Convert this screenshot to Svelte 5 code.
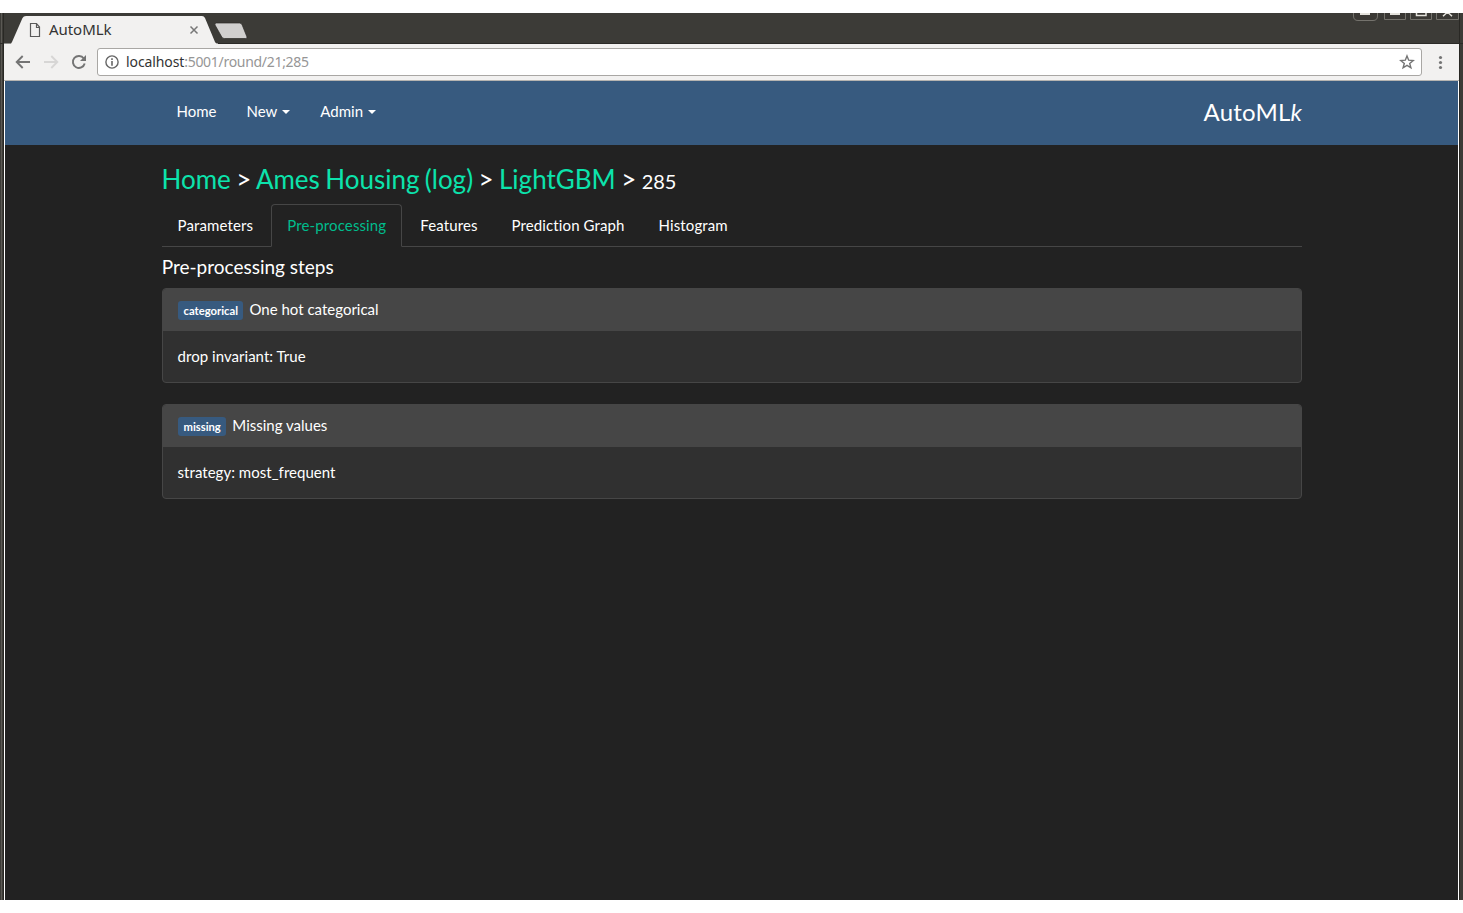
<script>
  const tabs = ['Parameters', 'Pre-processing', 'Features', 'Prediction Graph', 'Histogram'];
  const active = 'Pre-processing';
  const steps = [
    { tag: 'categorical', name: 'One hot categorical', detail: 'drop invariant: True' },
    { tag: 'missing', name: 'Missing values', detail: 'strategy: most_frequent' }
  ];
</script>

<div class="window">
  <header class="tabstrip">
    <svg class="shapes" width="260" height="31" viewBox="0 0 260 31">
      <path d="M4 31V30.500H11L12 29L22.500 5Q23.500 3 26 3H202Q204 3 205 5L215 29Q215.500 30.500 218 30.500V31Z" fill="#f2f1f0" />
      <path d="M216.500 10H239.500Q241.500 10 242.200 12L247 24Q247.500 25.500 245.500 25.500H224.500Q222.500 25.500 221.800 24L215 12Q214.300 10 216.500 10Z" fill="#d0cfce" stroke="#2b2a27" stroke-width=".7" />
      <path d="M30.500 10.500H36.500L39.500 14V23.500H30.500ZM36.500 10.500V14.500H39.500" fill="none" stroke="#5a5a5a" stroke-width="1.200" />
      <path d="M190.500 13.500L197.500 20.500M197.500 13.500L190.500 20.500" stroke="#777" stroke-width="1.500" />
    </svg>
    <span class="title">AutoMLk</span>
    <svg class="controls" width="112" height="9" viewBox="0 0 112 9">
      <g fill="#3b3935" stroke="#75736d">
        <path d="M2.500 0V3Q2.500 7.500 7 7.500H22Q26.500 7.500 26.500 3V0" />
        <path d="M33.500 0V6.500H54.500V0M59.500 0V6.500H80.500V0M85.500 0V6.500H107.500V0" />
      </g>
      <path d="M9 0H19V2H9ZM39 0H49V2H39Z" fill="#e4e2dc" />
      <path d="M65.500 0V2.500H75V0M92 3.200L96.500 -1L101 3.200" fill="none" stroke="#e4e2dc" stroke-width="1.500" />
    </svg>
  </header>

  <div class="toolbar">
    <svg class="nav-icons" width="93" height="36" viewBox="4 0 93 36">
      <g fill="none" stroke-width="1.900">
        <path d="M30 18H17M22.700 12L16.700 18L22.700 24" stroke="#747474" />
        <path d="M44 18H57M51.300 12L57.300 18L51.300 24" stroke="#d7d6d5" />
        <path d="M83.800 14.500A6 6 0 1 0 84.700 19.500" stroke="#747474" />
      </g>
      <path d="M86 11V17H80Z" fill="#747474" />
    </svg>
    <div class="address">
      <svg width="14" height="14" viewBox="0 0 14 14">
        <circle cx="7" cy="7" r="6.100" fill="none" stroke="#666" stroke-width="1.400" />
        <path d="M6.200 6H7.800V10.700H6.200ZM6.200 3.300H7.800V4.900H6.200Z" fill="#666" />
      </svg>
      <span class="url"><b>localhost</b>:5001/round/21;285</span>
      <svg class="star" width="16" height="16" viewBox="0 0 16 16">
        <path d="M8 1.900L9.700 6.200L14.200 6.500L10.700 9.400L11.900 13.800L8 11.300L4.100 13.800L5.300 9.400L1.800 6.500L6.300 6.200Z" fill="none" stroke="#747474" stroke-width="1.400" />
      </svg>
    </div>
    <svg class="more" width="6" height="18" viewBox="0 0 6 18">
      <g fill="#747474"><circle cx="3.500" cy="4.500" r="1.600" /><circle cx="3.500" cy="9.500" r="1.600" /><circle cx="3.500" cy="14.500" r="1.600" /></g>
    </svg>
  </div>

  <div class="page">
    <nav class="navbar">
      <div class="container">
        <span class="link">Home</span>
        <span class="link">New <i class="caret"></i></span>
        <span class="link">Admin <i class="caret"></i></span>
        <span class="brand">AutoML<em>k</em></span>
      </div>
    </nav>
    <main class="container">
      <h3><a href="#home">Home</a> &gt; <a href="#dataset">Ames Housing (log)</a> &gt; <a href="#model">LightGBM</a> &gt; <small>285</small></h3>
      <ul class="tabs">
        {#each tabs as tab}
          <li class:active={tab === active}>{tab}</li>
        {/each}
      </ul>
      <h4>Pre-processing steps</h4>
      {#each steps as step}
        <section class="panel">
          <div class="heading"><span class="label">{step.tag}</span><span>{step.name}</span></div>
          <div class="body">{step.detail}</div>
        </section>
      {/each}
    </main>
  </div>
</div>

<style>
  :global(body) { background: #fff; }
  * { box-sizing: border-box; }
  .window {
    width: 1463px;
    height: 887px;
    margin-top: 13px;
    padding: 0 4px;
    overflow: hidden;
    display: flex;
    flex-direction: column;
    background: linear-gradient(90deg, #3c3b37 0 1px, #5b5954 1px 2px, #3c3b37 2px 3px, #292824 3px 4px, #3c3b37 4px 1459px, #292824 1459px 1460px, #3c3b37 1460px);
    font-family: Lato, sans-serif;
  }
  .tabstrip { position: relative; height: 31px; margin: 0 -4px; flex: none; display: flex; box-shadow: inset 0 -1px #2b2a27; }
  .shapes { display: block; }
  .title { position: absolute; left: 49px; top: 6px; font: 15px/20px "Noto Sans", sans-serif; letter-spacing: -.05px; color: #333; }
  .controls { display: block; margin-left: auto; }
  .toolbar { height: 37px; flex: none; display: flex; align-items: flex-start; background: #f2f1f0; border-bottom: 1px solid #b6b4b1; }
  .nav-icons { flex: none; display: block; }
  .address { width: 1325px; height: 28px; margin: 4px 0 0; padding: 0 6px 0 7px; display: flex; align-items: center; background: #fff; border: 1px solid #a9a7a4; border-radius: 3px; }
  .url { margin-left: 7px; font: 14px/20px "Noto Sans", sans-serif; letter-spacing: -.3px; color: #969696; }
  .url b { font-weight: 400; letter-spacing: -.1px; color: #333; }
  .star { margin-left: auto; }
  .more { margin: 9px 0 0 15px; }
  .page { flex: 1; border: solid #fff; border-width: 0 1px; background: #222; color: #fff; font-size: 15px; line-height: 21px; }
  .navbar { height: 64px; background: #375a7f; }
  .container { width: 1140px; margin: 0 156px 0 157px; }
  .navbar .container { display: flex; align-items: center; height: 60px; gap: 30px; padding-left: 14.500px; }
  .link { display: flex; align-items: center; gap: 5px; }
  .caret { border: 4px solid transparent; border-top-color: #fff; border-bottom: 0; margin-top: 2px; }
  .brand { margin-left: auto; font-size: 24px; line-height: 30px; padding-top: 2px; letter-spacing: .2px; }
  h3 { margin: 0 0 0 -.5px; padding-top: 20px; height: 59px; font-size: 26px; line-height: 29px; font-weight: 400; word-spacing: -1.230px; }
  h3 a { color: #0ce3ac; text-decoration: none; }
  h3 small { font-size: 20px; }
  .tabs { margin: 0; padding: 0; height: 43px; display: flex; gap: 2px; list-style: none; border-bottom: 1px solid #464646; letter-spacing: .115px; }
  .tabs li { height: 43px; padding: 10px 15.200px 10px 14.800px; border: 1px solid transparent; border-radius: 4px 4px 0 0; }
  .tabs li:first-child { padding: 10px 14.800px 10px 14.600px; }
  .tabs .active { padding-left: 15.400px; color: #00bc8c; border-color: #464646; border-bottom-color: #222; background: #222; }
  h4 { margin: 9px 0 11px -.3px; font-size: 19px; line-height: 21px; font-weight: 400; }
  .panel { height: 95px; margin-bottom: 21px; background: #303030; border: 1px solid #464646; border-radius: 4px; overflow: hidden; }
  .heading { height: 42px; padding: 0 15px 2px; display: flex; align-items: center; gap: 6px; background: #464646; }
  .label { height: 19px; margin-top: 2px; padding: 0 5.500px; border-radius: 3px; background: #375a7f; font-size: 11.25px; line-height: 20px; font-weight: 700; }
  .body { padding: 15px 14.600px; letter-spacing: .03px; }
</style>
